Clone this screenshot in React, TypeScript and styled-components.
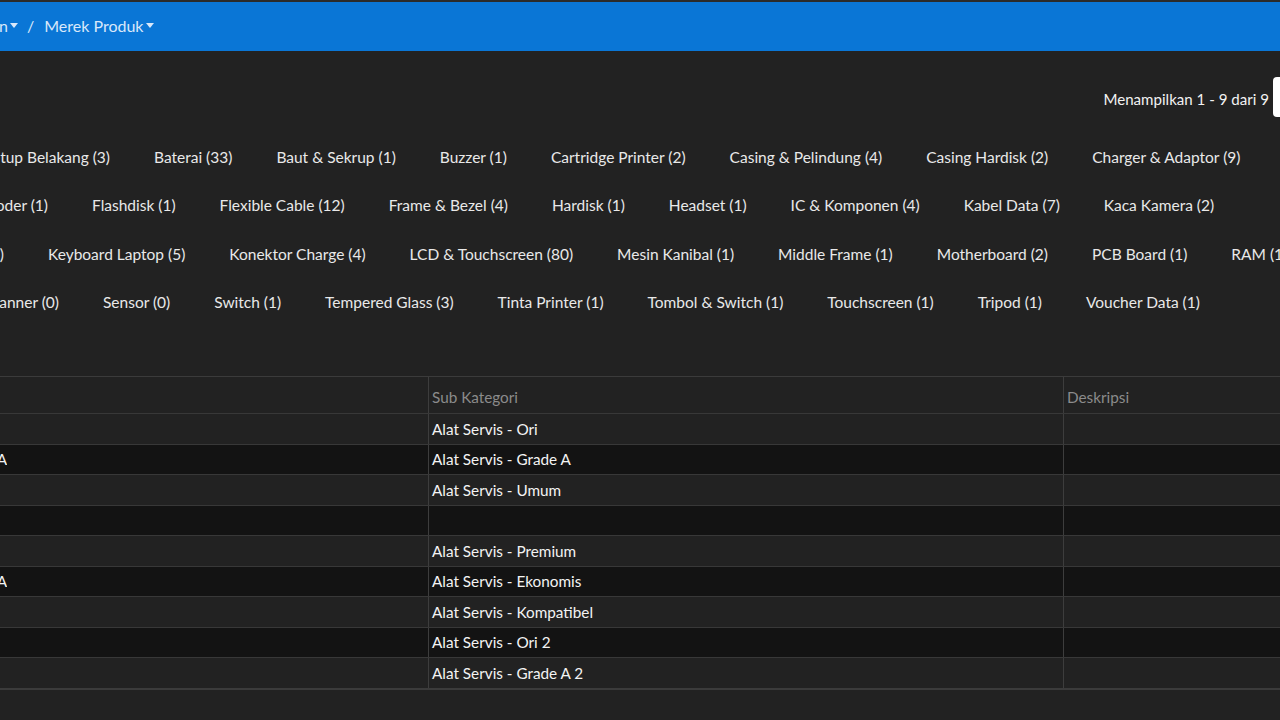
import React from "react";
import styled, { createGlobalStyle } from "styled-components";

const GlobalStyle = createGlobalStyle`
  html, body {
    margin: 0;
    padding: 0;
    background: #222222;
    overflow: hidden;
  }
  body {
    font-family: Lato, "Open Sans", "Liberation Sans", sans-serif;
    color: #ececec;
  }
`;

const Page = styled.div`
  width: 1280px;
  height: 720px;
  overflow: hidden;
  background: #222222;
`;

const TopBar = styled.div`
  height: 49px;
  border-top: 2px solid #2b2b2b;
  background: #0a76d6;
  display: flex;
  align-items: center;
  font-size: 16px;
  color: #d9e8fa;
`;

const Crumb = styled.div`
  display: flex;
  align-items: center;
  white-space: nowrap;
  margin-top: -2px;
`;

const Caret = styled.span`
  display: inline-block;
  width: 0;
  height: 0;
  margin-left: 2px;
  border-left: 4.5px solid transparent;
  border-right: 4.5px solid transparent;
  border-top: 5px solid #d9e8fa;
`;

const Slash = styled.span`
  margin: 0 10px 0 9px;
`;

// shows only the tail of a text that is scrolled off the left edge
const Lead = styled.div<{ w: number }>`
  width: ${p => p.w}px;
  flex-shrink: 0;
  display: flex;
  justify-content: flex-end;
  overflow: hidden;
  white-space: nowrap;
  & > span {
    flex-shrink: 0;
  }
`;

const Toolbar = styled.div`
  margin-top: 26px;
  height: 40px;
  display: flex;
  justify-content: flex-end;
  align-items: center;
  font-size: 15.1px;
  color: #f2f2f2;
`;

const Counter = styled.span`
  margin-top: 4px;
`;

const PerPage = styled.div`
  width: 70px;
  height: 40px;
  flex-shrink: 0;
  margin-left: 4px;
  margin-right: -63px;
  background: #ffffff;
  border-radius: 4px;
`;

const Categories = styled.div`
  margin-top: 16px;
  display: flex;
  flex-direction: column;
`;

const CatRow = styled.div`
  height: 48.3px;
  display: flex;
  align-items: center;
  gap: 44px;
  font-size: 15.5px;
  color: #e9e9e9;
  white-space: nowrap;
`;

const Cat = styled.span`
  flex-shrink: 0;
`;

const Table = styled.div`
  margin-top: 50px;
  border-top: 1px solid #3b3b3b;
  border-bottom: 2px solid #3b3b3b;
  font-size: 15.3px;
`;

const Row = styled.div<{ dark?: boolean; head?: boolean }>`
  display: grid;
  grid-template-columns: 428px 635px 1fr;
  height: ${p => (p.head ? 36 : 29.5)}px;
  background: ${p => (p.dark ? "#131313" : "#222222")};
  border-bottom: 1px solid #383838;
  &:last-child {
    border-bottom: none;
  }
`;

const Cell = styled.div<{ head?: boolean }>`
  display: flex;
  align-items: center;
  padding-left: 3px;
  border-left: 1px solid #3d3d3d;
  color: ${p => (p.head ? "#8b8b8b" : "#f3f3f3")};
  white-space: nowrap;
  overflow: hidden;
  padding-top: ${p => (p.head ? 4 : 0)}px;
  &:first-child {
    border-left: none;
    padding-left: 0;
  }
`;

const rows: { lead: string[]; items: string[] }[] = [
  {
    lead: ["Tutup Belakang (3)", "110"],
    items: [
      "Baterai (33)",
      "Baut & Sekrup (1)",
      "Buzzer (1)",
      "Cartridge Printer (2)",
      "Casing & Pelindung (4)",
      "Casing Hardisk (2)",
      "Charger & Adaptor (9)",
    ],
  },
  {
    lead: ["Decoder (1)", "48"],
    items: [
      "Flashdisk (1)",
      "Flexible Cable (12)",
      "Frame & Bezel (4)",
      "Hardisk (1)",
      "Headset (1)",
      "IC & Komponen (4)",
      "Kabel Data (7)",
      "Kaca Kamera (2)",
    ],
  },
  {
    lead: ["Kamera (1)", "4"],
    items: [
      "Keyboard Laptop (5)",
      "Konektor Charge (4)",
      "LCD & Touchscreen (80)",
      "Mesin Kanibal (1)",
      "Middle Frame (1)",
      "Motherboard (2)",
      "PCB Board (1)",
      "RAM (1)",
    ],
  },
  {
    lead: ["Scanner (0)", "59"],
    items: [
      "Sensor (0)",
      "Switch (1)",
      "Tempered Glass (3)",
      "Tinta Printer (1)",
      "Tombol & Switch (1)",
      "Touchscreen (1)",
      "Tripod (1)",
      "Voucher Data (1)",
    ],
  },
];

const subs: { first: string; sub: string }[] = [
  { first: "", sub: "Alat Servis - Ori" },
  { first: "Grade A", sub: "Alat Servis - Grade A" },
  { first: "", sub: "Alat Servis - Umum" },
  { first: "", sub: "" },
  { first: "", sub: "Alat Servis - Premium" },
  { first: "KW A", sub: "Alat Servis - Ekonomis" },
  { first: "", sub: "Alat Servis - Kompatibel" },
  { first: "", sub: "Alat Servis - Ori 2" },
  { first: "", sub: "Alat Servis - Grade A 2" },
];

export default function App() {
  return (
    <Page>
      <GlobalStyle />
      <TopBar>
        <Crumb>
          <Lead w={8}>
            <span>Pengaturan</span>
          </Lead>
          <Caret />
          <Slash>/</Slash>
          <span>Merek Produk</span>
          <Caret />
        </Crumb>
      </TopBar>

      <Toolbar>
        <Counter>Menampilkan 1 - 9 dari 9</Counter>
        <PerPage />
      </Toolbar>

      <Categories>
        {rows.map(r => (
          <CatRow key={r.items[0]}>
            <Lead w={Number(r.lead[1])}>
              <span>{r.lead[0]}</span>
            </Lead>
            {r.items.map(item => (
              <Cat key={item}>{item}</Cat>
            ))}
          </CatRow>
        ))}
      </Categories>

      <Table>
        <Row head>
          <Cell head />
          <Cell head>Sub Kategori</Cell>
          <Cell head>Deskripsi</Cell>
        </Row>
        {subs.map((s, i) => (
          <Row key={i} dark={i % 2 === 1}>
            <Cell>
              {s.first && (
                <Lead w={7}>
                  <span>{s.first}</span>
                </Lead>
              )}
            </Cell>
            <Cell>{s.sub}</Cell>
            <Cell />
          </Row>
        ))}
      </Table>
    </Page>
  );
}
